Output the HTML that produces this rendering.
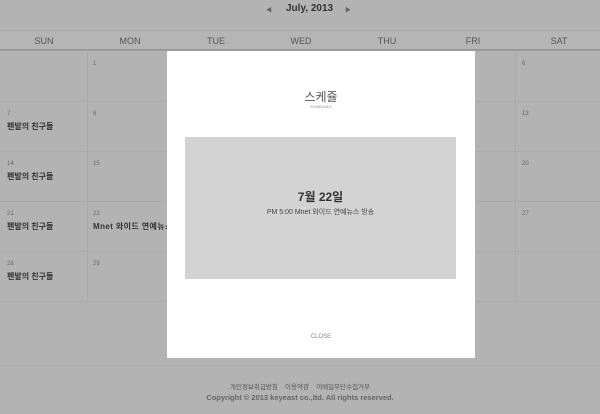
<!DOCTYPE html>
<html><head><meta charset="utf-8"><style>
*{margin:0;padding:0;box-sizing:border-box}
body{width:600px;height:414px;background:#b3b3b3;font-family:"Liberation Sans","Noto Sans CJK KR",sans-serif;position:relative;overflow:hidden;color:#333}
.a{position:absolute}
.hd{top:30px;left:0;width:600px;height:21px;border-top:1px solid #a8a8a8;border-bottom:2px solid #9a9a9a;background:#b5b5b5}
.hd span{position:absolute;top:5px;font-size:9px;color:#555;width:86px;text-align:center}
.rl{left:0;width:600px;height:1px;background:#a9a9a9}
.vl{width:1px;background:#a9a9a9}
.n{font-size:6px;color:#666}
.ev{font-size:8px;font-weight:bold;color:#333}
</style></head><body>
<div class="a" style="top:5px;left:266px;font-size:6px;color:#666">◀</div>
<div class="a" style="top:3px;left:286px;font-size:10px;font-weight:bold;color:#333">July, 2013</div>
<div class="a" style="top:5px;left:345px;font-size:6px;color:#666">▶</div>
<div class="a hd">
<span style="left:1px">SUN</span><span style="left:87px">MON</span><span style="left:173px">TUE</span><span style="left:258px">WED</span><span style="left:344px">THU</span><span style="left:430px">FRI</span><span style="left:516px">SAT</span>
</div>
<div class="a rl" style="top:101px"></div>
<div class="a rl" style="top:151px"></div>
<div class="a rl" style="top:201px"></div>
<div class="a rl" style="top:251px"></div>
<div class="a rl" style="top:301px"></div>
<div class="a rl" style="top:365px"></div>
<div class="a vl" style="left:87px;top:53px;height:246px"></div>
<div class="a vl" style="left:515px;top:53px;height:246px"></div>
<div class="a n" style="left:93px;top:61px">1</div>
<div class="a n" style="left:522px;top:61px">6</div>
<div class="a n" style="left:7px;top:111px">7</div>
<div class="a n" style="left:93px;top:111px">8</div>
<div class="a n" style="left:522px;top:111px">13</div>
<div class="a n" style="left:7px;top:161px">14</div>
<div class="a n" style="left:93px;top:161px">15</div>
<div class="a n" style="left:522px;top:161px">20</div>
<div class="a n" style="left:7px;top:211px">21</div>
<div class="a n" style="left:93px;top:211px">22</div>
<div class="a n" style="left:522px;top:211px">27</div>
<div class="a n" style="left:7px;top:261px">28</div>
<div class="a n" style="left:93px;top:261px">29</div>
<div class="a ev" style="left:7px;top:121px">펜발의 친구들</div>
<div class="a ev" style="left:7px;top:171px">펜발의 친구들</div>
<div class="a ev" style="left:7px;top:221px">펜발의 친구들</div>
<div class="a ev" style="left:93px;top:221px;letter-spacing:0.4px">Mnet 와이드 연예뉴스</div>
<div class="a ev" style="left:7px;top:271px">펜발의 친구들</div>
<div class="a" style="left:167px;top:51px;width:308px;height:307px;background:#fff">
<div class="a" style="left:0;width:308px;top:37px;text-align:center;font-size:12px;color:#555">스케쥴</div>
<div class="a" style="left:0;width:308px;top:53px;text-align:center;font-size:4px;color:#888">SCHEDULE</div>
<div class="a" style="left:18px;top:86px;width:271px;height:142px;background:#d3d3d3">
<div class="a" style="left:0;width:271px;top:51px;text-align:center;font-size:12px;font-weight:bold;color:#333">7월 22일</div>
<div class="a" style="left:0;width:271px;top:70px;text-align:center;font-size:7px;color:#444">PM 5:00 Mnet 와이드 연예뉴스 방송</div>
</div>
<div class="a" style="left:0;width:308px;top:283px;text-align:center;font-size:6px;color:#888">CLOSE</div>
</div>
<div class="a" style="left:0;width:600px;top:381px;text-align:center;font-size:6.5px;color:#555">개인정보취급방침 &nbsp;&nbsp; 이용약관 &nbsp;&nbsp; 이메일무단수집거부</div>
<div class="a" style="left:0;width:600px;top:393px;text-align:center;font-size:7.5px;font-weight:bold;color:#666">Copyright © 2013 keyeast co.,ltd. All rights reserved.</div>
</body></html>
